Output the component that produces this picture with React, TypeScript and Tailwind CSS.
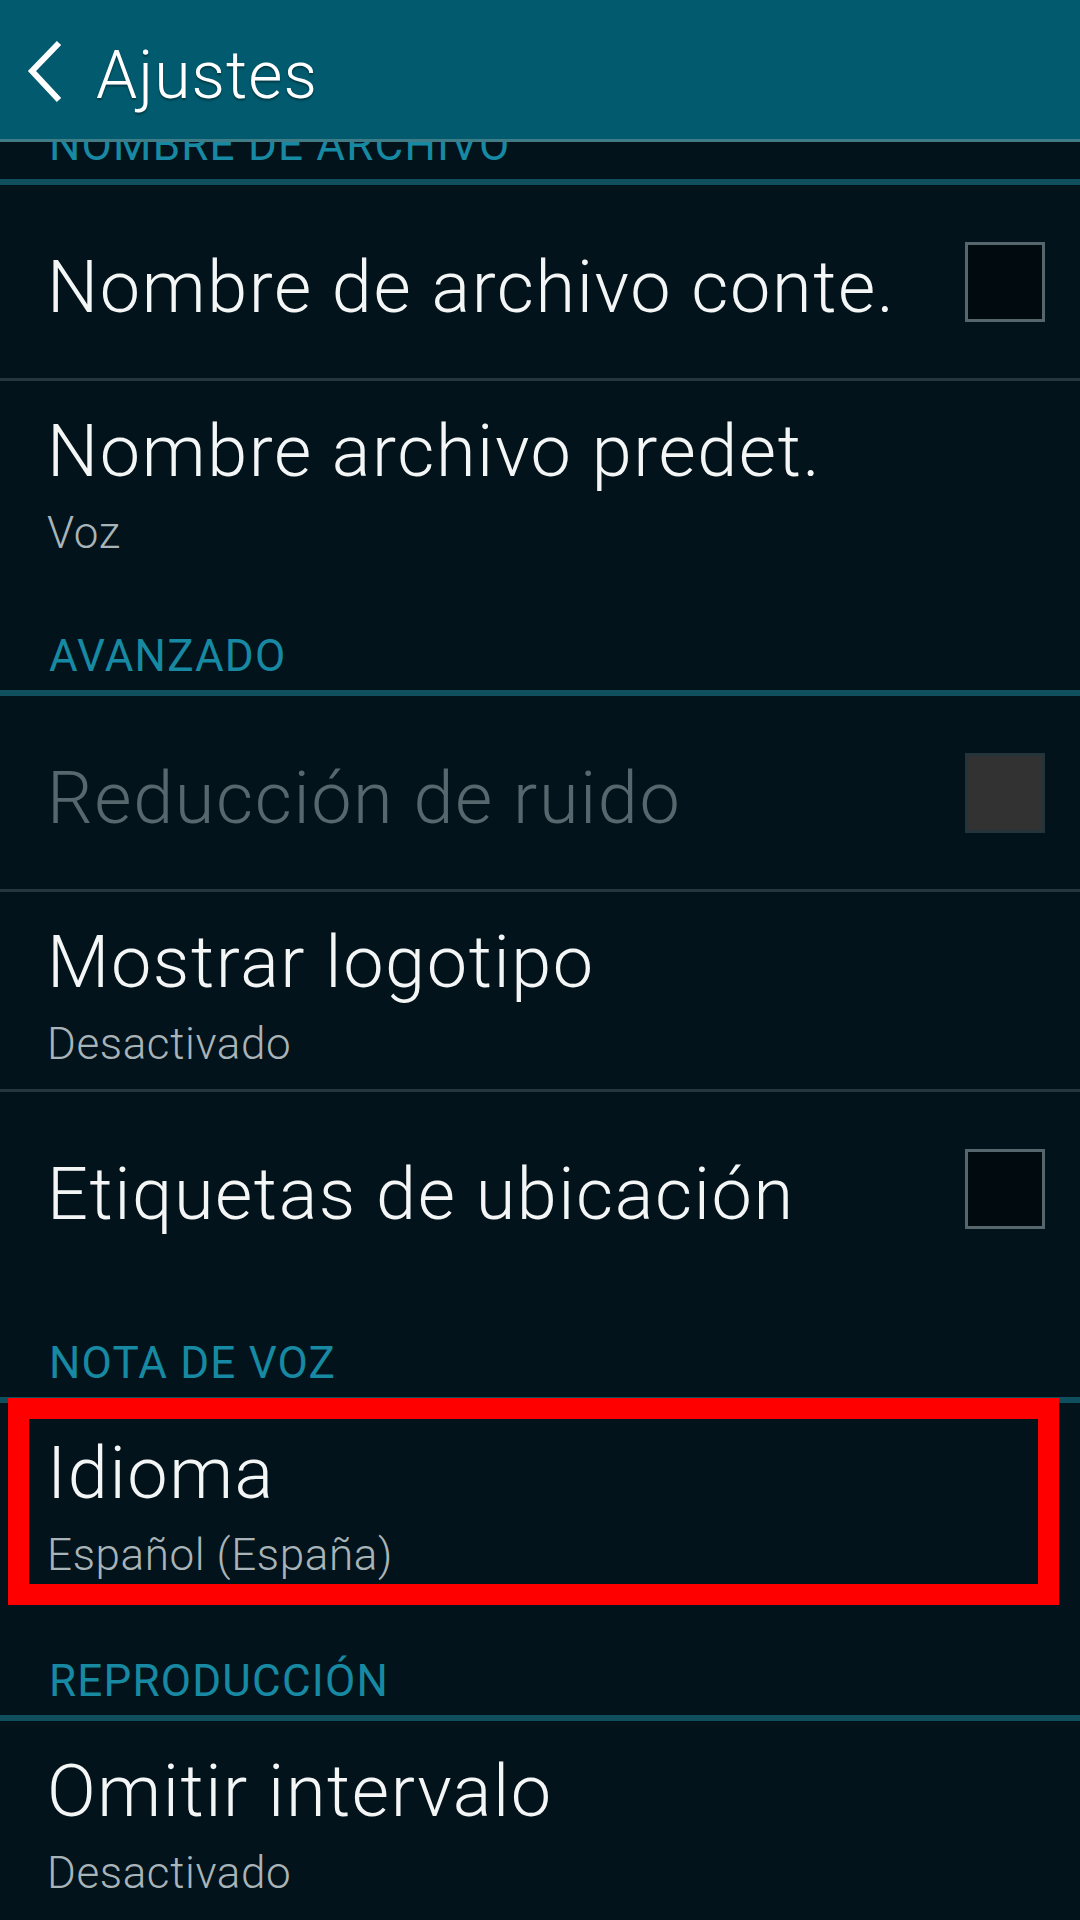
import React from 'react'

type Row =
  | { kind: 'check'; title: string; disabled?: boolean }
  | { kind: 'value'; title: string; value: string; marked?: boolean }

interface Section {
  label: string
  clipped?: boolean
  tall?: boolean
  rows: Row[]
}

const sections: Section[] = [
  {
    label: 'NOMBRE DE ARCHIVO',
    clipped: true,
    rows: [
      { kind: 'check', title: 'Nombre de archivo conte.' },
      { kind: 'value', title: 'Nombre archivo predet.', value: 'Voz' },
    ],
  },
  {
    label: 'AVANZADO',
    rows: [
      { kind: 'check', title: 'Reducción de ruido', disabled: true },
      { kind: 'value', title: 'Mostrar logotipo', value: 'Desactivado' },
      { kind: 'check', title: 'Etiquetas de ubicación' },
    ],
  },
  {
    label: 'NOTA DE VOZ',
    rows: [{ kind: 'value', title: 'Idioma', value: 'Español (España)', marked: true }],
  },
  {
    label: 'REPRODUCCIÓN',
    tall: true,
    rows: [{ kind: 'value', title: 'Omitir intervalo', value: 'Desactivado' }],
  },
]

const font = { fontFamily: 'Roboto, "Noto Sans", sans-serif' }

function Checkbox({ disabled }: { disabled?: boolean }) {
  return disabled ? (
    <div className="w-[80px] h-[80px] shrink-0 border-[3px] border-[#24343a] bg-[#323232]" />
  ) : (
    <div className="w-[80px] h-[80px] shrink-0 border-[3px] border-[#56666d] bg-[#010a0f]" />
  )
}

function SettingRow({ row }: { row: Row }) {
  if (row.kind === 'check') {
    return (
      <div className="h-[193px] flex items-center justify-between pl-[47px] pr-[35px]">
        <span
          className={`pt-[12px] text-[72px] leading-[70px] tracking-[1.6px] font-light whitespace-nowrap ${
            row.disabled ? 'text-[#56676d]' : 'text-[#f4f6f6]'
          }`}
        >
          {row.title}
        </span>
        <Checkbox disabled={row.disabled} />
      </div>
    )
  }
  return (
    <div className="relative h-[197px] flex flex-col pl-[47px] pt-[36px]">
      <span className="text-[72px] leading-[70px] tracking-[1.6px] font-light text-[#f4f6f6] whitespace-nowrap">
        {row.title}
      </span>
      <span className="mt-[24px] text-[44px] leading-[44px] tracking-[0.6px] font-light text-[#a9b4b8]">
        {row.value}
      </span>
      {row.marked && (
        // annotation frame drawn over the row
        <div className="absolute -top-[5px] -bottom-[5px] left-[8px] right-[21px] border-[21px] border-[#ff0000]" />
      )}
    </div>
  )
}

function SectionHeader({ label, clipped, tall }: { label: string; clipped?: boolean; tall?: boolean }) {
  const h = clipped ? 'h-[37px]' : tall ? 'h-[115px]' : 'h-[112px]'
  return (
    <>
      <div className={`${h} overflow-hidden flex items-end pl-[49px] pb-[12px]`}>
        <span className="text-[44px] leading-[44px] tracking-[1.2px] text-[#1789a2] whitespace-nowrap">
          {label}
        </span>
      </div>
      <div className="h-[6px] bg-[#10505e]" />
    </>
  )
}

export default function App() {
  return (
    <div className="w-[1080px] h-[1920px] overflow-hidden bg-[#02131b]" style={font}>
      {/* Action bar */}
      <div className="h-[139px] bg-[#015a6d] flex items-center">
        <svg className="ml-[26px] mt-[4px]" width="40" height="64" viewBox="0 0 40 64" fill="none">
          <path d="M33 3 L6 31 L33 60" stroke="#ffffff" strokeWidth="6" strokeLinecap="butt" strokeLinejoin="miter" />
        </svg>
        <span
          className="ml-[30px] pt-[13px] text-[66px] leading-[64px] tracking-[1px] font-light text-white"
          style={{ textShadow: '0 2px 2px rgba(0,0,0,0.35)' }}
        >
          Ajustes
        </span>
      </div>
      <div className="h-[3px] bg-[#3e7c88]" />

      {sections.map((s) => (
        <div key={s.label}>
          <SectionHeader label={s.label} clipped={s.clipped} tall={s.tall} />
          {s.rows.map((r, i) => (
            <div key={r.title}>
              <SettingRow row={r} />
              {i < s.rows.length - 1 && <div className="h-[3px] bg-[#25363e]" />}
            </div>
          ))}
        </div>
      ))}
    </div>
  )
}
